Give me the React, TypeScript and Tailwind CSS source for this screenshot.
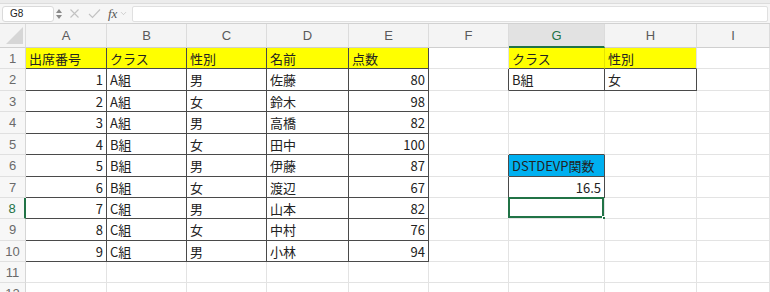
import { ChevronDown } from "lucide-react";

type Cell = { v: string; right?: boolean; fill?: "y" | "b" };

const LETTERS = ["A", "B", "C", "D", "E", "F", "G", "H", "I"];
const GRID =
  "grid grid-cols-[26px_81px_80px_80px_82px_80px_80px_96px_92px_73px] grid-rows-[100%]";
const ROW_H = [
  "h-[21px]",
  "h-[22px]",
  "h-[21px]",
  "h-[22px]",
  "h-[21px]",
  "h-[22px]",
  "h-[21px]",
  "h-[21px]",
  "h-[22px]",
  "h-[21px]",
  "h-[21px]",
  "h-[21px]",
];

const students = [
  ["1", "A組", "男", "佐藤", "80"],
  ["2", "A組", "女", "鈴木", "98"],
  ["3", "A組", "男", "高橋", "82"],
  ["4", "B組", "女", "田中", "100"],
  ["5", "B組", "男", "伊藤", "87"],
  ["6", "B組", "女", "渡辺", "67"],
  ["7", "C組", "男", "山本", "82"],
  ["8", "C組", "女", "中村", "76"],
  ["9", "C組", "男", "小林", "94"],
];

const cells: Record<string, Cell> = {};
["出席番号", "クラス", "性別", "名前", "点数"].forEach((v, c) => {
  cells[`1,${c}`] = { v, fill: "y" };
});
students.forEach((row, i) => {
  row.forEach((v, c) => {
    cells[`${i + 2},${c}`] = { v, right: c === 0 || c === 4 };
  });
});
cells["1,6"] = { v: "クラス", fill: "y" };
cells["1,7"] = { v: "性別", fill: "y" };
cells["2,6"] = { v: "B組" };
cells["2,7"] = { v: "女" };
cells["6,6"] = { v: "DSTDEVP関数", fill: "b" };
cells["7,6"] = { v: "16.5", right: true };

// cells that carry a dark border on every side
const boxed = (r: number, c: number) =>
  (r >= 1 && r <= 10 && c >= 0 && c <= 4) ||
  (r === 2 && (c === 6 || c === 7)) ||
  (c === 6 && (r === 6 || r === 7));

function SheetCell({ r, c }: { r: number; c: number }) {
  const cell = cells[`${r},${c}`];
  const darkR = boxed(r, c) || boxed(r, c + 1);
  const darkB = boxed(r, c) || boxed(r + 1, c);
  const yellowJoin =
    !darkR && cell?.fill === "y" && cells[`${r},${c + 1}`]?.fill === "y";
  const selected = r === 8 && c === 6;

  return (
    <div
      className={`relative flex min-h-0 items-center border-r border-b px-[3px] pt-[1px] leading-[16px] whitespace-nowrap ${
        darkR
          ? "border-r-[#4a4a4a]"
          : yellowJoin
          ? "border-r-[#e4e400]"
          : "border-r-[#e3e3e3]"
      } ${darkB ? "border-b-[#4a4a4a]" : "border-b-[#e3e3e3]"} ${
        cell?.fill === "y"
          ? "bg-[#ffff00]"
          : cell?.fill === "b"
          ? "bg-[#00b0f0]"
          : "bg-white"
      } ${cell?.right ? "justify-end" : "justify-start"}`}
    >
      {cell && <span>{cell.v}</span>}
      {selected && (
        <>
          <div className="absolute -left-px -top-px h-[calc(100%+1px)] w-[calc(100%+1px)] border-2 border-[#217346]" />
          <div className="absolute -right-[3px] -bottom-[3px] h-[5px] w-[5px] border border-white bg-[#217346]" />
        </>
      )}
    </div>
  );
}

function FormulaBar() {
  return (
    <div>
      <div className="h-[4px] border-b border-[#dcdcdc] bg-[#ececec]" />
      <div className="flex h-[20px] items-center border-b border-[#d2d2d2] bg-[#f6f6f6] pr-[2px]">
        <div className="ml-[2px] flex h-[16px] w-[52px] items-center rounded-[3px] border border-[#dadada] bg-white pl-[7px] font-['Liberation_Sans',sans-serif] text-[10px] text-[#222]">
          G8
        </div>
        <div className="ml-[2px] flex w-[6px] flex-col items-center gap-[2px]">
          <svg width="6" height="4" viewBox="0 0 6 4">
            <path d="M3 0 L6 4 L0 4 Z" fill="#8a8a8a" />
          </svg>
          <svg width="6" height="4" viewBox="0 0 6 4">
            <path d="M0 0 L6 0 L3 4 Z" fill="#8a8a8a" />
          </svg>
        </div>
        <svg width="11" height="11" viewBox="0 0 11 11" className="ml-[7px]">
          <path d="M1.5 1.5 L9.5 9.5 M9.5 1.5 L1.5 9.5" stroke="#c2c2c2" strokeWidth="1.1" />
        </svg>
        <svg width="13" height="11" viewBox="0 0 13 11" className="ml-[8px]">
          <path d="M1 6 L4.5 9.5 L12 1.5" stroke="#c2c2c2" strokeWidth="1.1" fill="none" />
        </svg>
        <span className="ml-[7px] font-['Liberation_Serif',serif] text-[13px] italic leading-none text-[#555]">
          fx
        </span>
        <ChevronDown size={9} strokeWidth={1.5} className="ml-[2px] text-[#b0b0b0]" />
        <div className="ml-[4px] h-[16px] flex-1 rounded-[2px] border border-[#e0e0e0] bg-white" />
      </div>
    </div>
  );
}

function ColumnHeader() {
  return (
    <div className={`${GRID} h-[24px] bg-[#f4f4f4] font-['Liberation_Sans',sans-serif] text-[13px] leading-[16px]`}>
      <div className="relative border-r border-b border-r-[#dcdcdc] border-b-[#cfcfcf]">
        <svg width="17" height="17" viewBox="0 0 17 17" className="absolute right-[2px] bottom-[3px]">
          <path d="M17 0 L17 17 L0 17 Z" fill="#d6d6d6" />
        </svg>
      </div>
      {LETTERS.map((l) =>
        l === "G" ? (
          <div
            key={l}
            className="flex items-center justify-center border-r border-b-2 border-r-[#dcdcdc] border-b-[#217346] bg-[#e2e2e2] pt-[2px] text-[#217346]"
          >
            {l}
          </div>
        ) : (
          <div
            key={l}
            className="flex items-center justify-center border-r border-b border-r-[#dcdcdc] border-b-[#cfcfcf] pt-[1px] text-[#5a5a5a]"
          >
            {l}
          </div>
        )
      )}
    </div>
  );
}

export default function App() {
  return (
    <div className="h-[292px] w-[770px] overflow-hidden bg-white font-['Noto_Sans_CJK_JP','Noto_Sans',sans-serif] text-[13px] text-[#222]">
      <FormulaBar />
      <ColumnHeader />
      {ROW_H.map((h, i) => {
        const r = i + 1;
        return (
          <div key={r} className={`${GRID} ${h}`}>
            <div
              className={`flex min-h-0 items-center justify-center border-b border-b-[#e0e0e0] bg-[#f7f7f7] pt-[1px] font-['Liberation_Sans',sans-serif] text-[13px] leading-[16px] ${
                r === 8
                  ? "border-r-2 border-r-[#217346] bg-[#ececec] text-[#217346]"
                  : "border-r border-r-[#d6d6d6] text-[#6a6a6a]"
              }`}
            >
              {r}
            </div>
            {LETTERS.map((_, c) => (
              <SheetCell key={c} r={r} c={c} />
            ))}
          </div>
        );
      })}
    </div>
  );
}
